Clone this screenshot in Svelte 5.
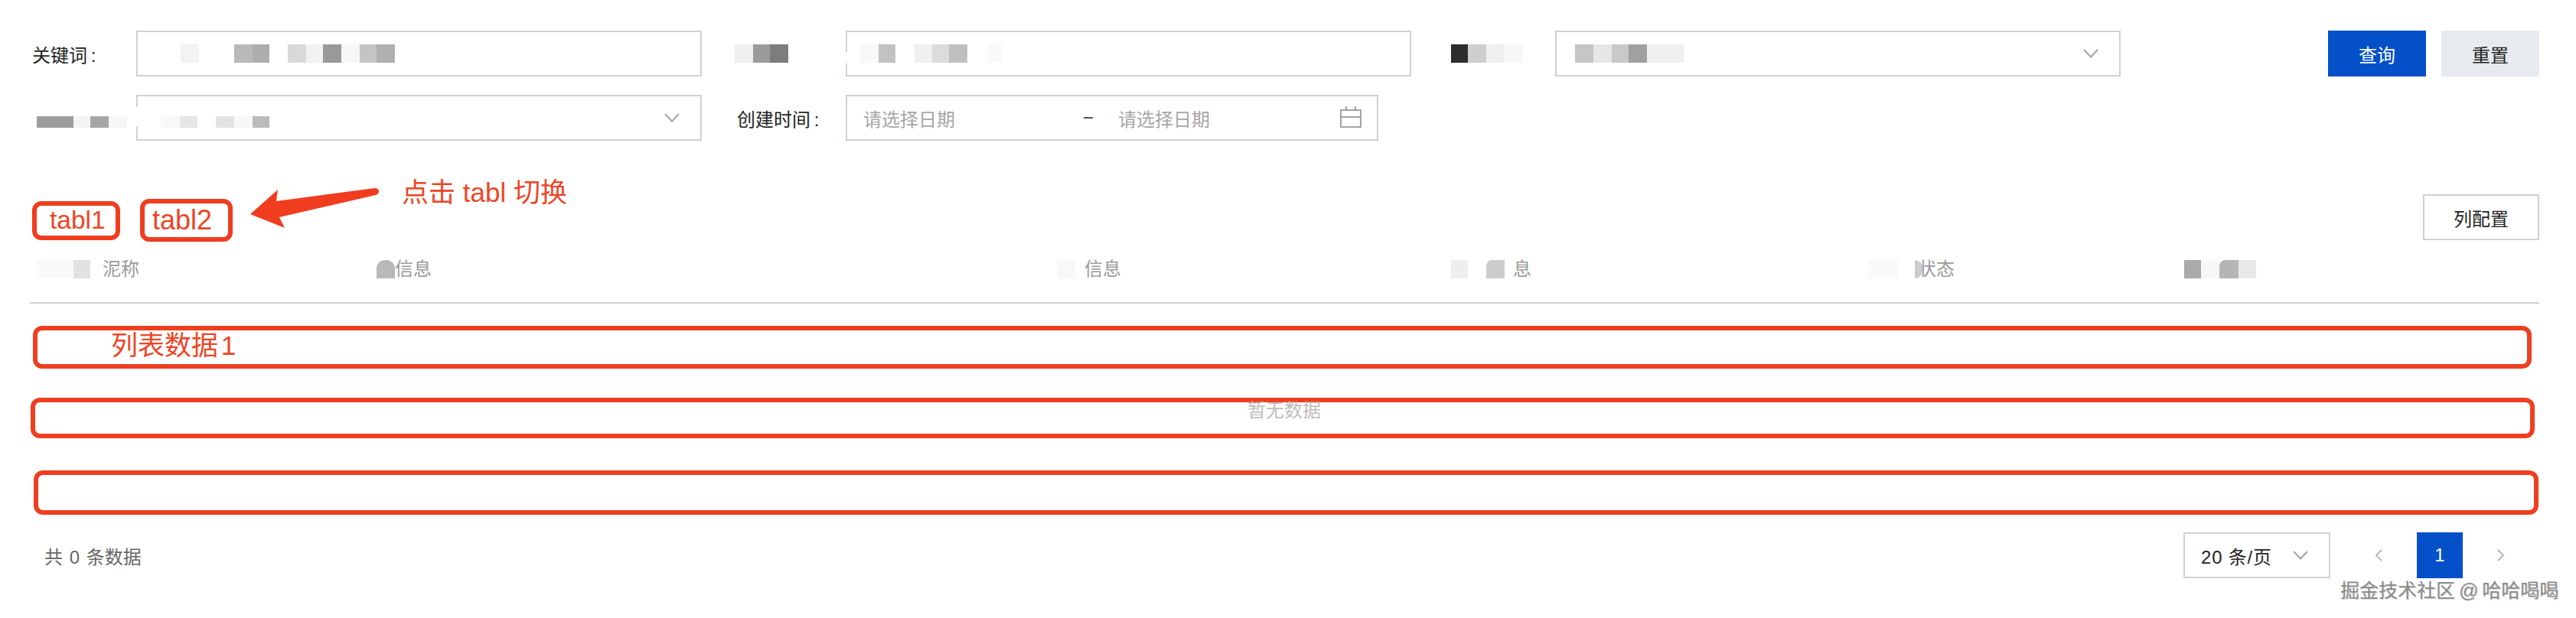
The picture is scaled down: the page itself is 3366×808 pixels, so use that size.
<script>
  // redacted text in the screenshot is mosaic: [width, colour, radius], no colour = gap
  const keywordCells = [[40], [24, '#f3f3f3'], [46], [24, '#b9b9b9'], [22, '#aeaeae'], [24], [24, '#d9d9d9'], [22, '#f2f2f2'], [24, '#999'], [24, '#f7f7f7'], [22, '#c4c4c4'], [24, '#b0b0b0']];
  const secondLabel = [[24, '#efefef'], [22, '#9b9b9b'], [24, '#7d7d7d']];
  const secondCells = [[25, '#f8f8f8'], [22, '#c2c2c2'], [25], [23, '#f0f0f0'], [22, '#dcdcdc'], [24, '#bfbfbf'], [26], [20, '#f9f9f9']];
  const thirdLabel = [[9], [22, '#2d2d2d'], [24, '#cfcfcf'], [23, '#efefef'], [25, '#f7f7f7']];
  const thirdCells = [[8], [24, '#c6c6c6'], [24, '#e6e6e6'], [22, '#c9c9c9'], [24, '#a0a0a0'], [48, '#efefef']];
  const fourthLabel = [[8], [48, '#9c9c9c'], [22, '#f4f4f4'], [24, '#a5a5a5'], [24, '#f6f6f6']];
  const fourthCells = [[14], [25, '#f8f8f8'], [23, '#e6e6e6'], [24], [24, '#e2e2e2'], [24, '#f7f7f7'], [22, '#bbb']];

  const columns = [
    { cells: [[48, '#f9f9f9'], [22, '#e2e2e2'], [16]], text: '泥称' },
    { cells: [[24, '#b9b9b9', '11px 11px 0 0']], text: '信息' },
    { cells: [[24, '#f8f8f8'], [12]], text: '信息' },
    { cells: [[22, '#eee'], [24], [24, '#ccc', '8px 0 0 0'], [11]], text: '息' },
    { cells: [[40, '#fafafa'], [22], [10, '#ccc', '0 10px 10px 0']], text: '状态', tuck: true },
    { cells: [[22, '#aaa'], [24, '#f7f7f7'], [25, '#b5b5b5', '8px 0 0 0'], [23, '#e8e8e8']], text: '' }
  ];
</script>

{#snippet mosaic(cells, low = false)}
  <span class="mosaic" class:low>
    {#each cells as [width, colour, radius]}
      <i style="width: {width}px; background: {colour ?? 'transparent'}; border-radius: {radius ?? 0};"></i>
    {/each}
  </span>
{/snippet}

{#snippet chevron()}
  <svg class="chevron" viewBox="0 0 20 12" aria-hidden="true">
    <path d="M1 1 L10 10.5 L19 1" />
  </svg>
{/snippet}

<div class="page">
  <section class="search">
    <div class="fields">
      <div class="field">
        <span class="label keyword">关键词 :</span>
        <div class="control">{@render mosaic(keywordCells)}</div>
      </div>
      <div class="field">
        <span class="label">{@render mosaic(secondLabel)}</span>
        <div class="control">
          <b class="erase upper"></b>
          {@render mosaic(secondCells)}
        </div>
      </div>
      <div class="field">
        <span class="label">{@render mosaic(thirdLabel)}</span>
        <div class="control select">
          {@render mosaic(thirdCells)}
          {@render chevron()}
        </div>
      </div>
      <div class="field">
        <span class="label">{@render mosaic(fourthLabel, true)}</span>
        <div class="control select">
          <b class="erase lower"></b>
          {@render mosaic(fourthCells, true)}
          {@render chevron()}
        </div>
      </div>
      <div class="field">
        <span class="label date-label">创建时间 :</span>
        <div class="control date">
          <span class="placeholder">请选择日期</span>
          <span class="dash"></span>
          <span class="placeholder">请选择日期</span>
          <svg class="calendar" viewBox="0 0 28 28" aria-hidden="true">
            <rect x="1" y="5" width="26" height="22" />
            <path d="M1 14 H27 M8 0 V5 M20 0 V5" />
          </svg>
        </div>
      </div>
    </div>
    <div class="actions">
      <button class="btn primary">查询</button>
      <button class="btn muted">重置</button>
    </div>
  </section>

  <section class="toolbar">
    <div class="tabs">
      <div class="tab first">tabl1</div>
      <div class="tab second">tabl2</div>
    </div>
    <button class="btn outline">列配置</button>
  </section>

  <div class="thead">
    {#each columns as col}
      <div class="th">
        {@render mosaic(col.cells)}
        {#if col.text}<span class:tuck={col.tuck}>{col.text}</span>{/if}
      </div>
    {/each}
  </div>

  <div class="rows">
    <div class="row one">列表数据 1</div>
    <div class="row two"><span>暂无数据</span></div>
    <div class="row three"></div>
  </div>

  <footer class="footer">
    <span class="total">共 0 条数据</span>
    <div class="pager">
      <div class="size">
        <span>20 条/页</span>
        {@render chevron()}
      </div>
      <div class="pages">
        <span class="nav">
          <svg viewBox="0 0 10 16" aria-hidden="true"><path d="M9 1 L2 8 L9 15" /></svg>
        </span>
        <span class="current">1</span>
        <span class="nav">
          <svg viewBox="0 0 10 16" aria-hidden="true"><path d="M1 1 L8 8 L1 15" /></svg>
        </span>
      </div>
    </div>
  </footer>

  <!-- hand-drawn annotation on top of the screenshot -->
  <svg class="arrow" viewBox="0 0 180 64" aria-hidden="true">
    <path d="M7 40 L43 8 L41 23 L169 6 Q175 6 175 10 Q175 14 171 15 L45 44 L52 58 Z" />
  </svg>
  <div class="note">点击 tabl 切换</div>
  <div class="watermark">掘金技术社区 @ 哈哈喝喝</div>
</div>

<style>
  :global(body) {
    margin: 0;
    background: #fff;
  }

  .page {
    position: relative;
    box-sizing: border-box;
    width: 3366px;
    height: 808px;
    padding: 40px 48px 0 40px;
    overflow: hidden;
    background: #fff;
    color: #222;
    font-family: "Liberation Sans", "Noto Sans CJK SC", sans-serif;
    font-size: 24px;
  }

  .search {
    display: flex;
    justify-content: space-between;
    align-items: flex-start;
  }

  .fields {
    display: grid;
    grid-template-columns: 877px 884px 884px;
    column-gap: 43px;
    row-gap: 24px;
  }

  .field {
    display: grid;
    grid-template-columns: 1fr 739px;
    align-items: center;
  }

  .label {
    word-spacing: -2px;
  }

  .keyword {
    padding-left: 2px;
  }

  .date-label {
    padding-left: 3px;
  }

  .control {
    position: relative;
    box-sizing: border-box;
    display: flex;
    align-items: center;
    height: 60px;
    padding: 0 27px 0 16px;
    border: 2px solid #ced1d4;
  }

  .select {
    justify-content: space-between;
  }

  /* mosaic smudge eats the left border in two places */
  .erase {
    position: absolute;
    left: -2px;
    width: 2px;
    background: #fff;
  }

  .erase.upper {
    top: 26px;
    height: 15px;
  }

  .erase.lower {
    top: 14px;
    height: 25px;
  }

  .date {
    width: 696px;
    padding-left: 21px;
    justify-self: start;
  }

  .placeholder {
    color: #a6a6a6;
  }

  .dash {
    width: 12px;
    height: 2px;
    margin: 0 33px 0 168px;
    background: #555;
  }

  .calendar {
    position: absolute;
    right: 20px;
    top: 13px;
    width: 28px;
    height: 28px;
    fill: none;
    stroke: #a3a3a3;
    stroke-width: 2;
  }

  .mosaic {
    position: relative;
    z-index: 1;
    display: flex;
    flex: none;
    height: 24px;
  }

  .mosaic.low {
    height: 15px;
    margin-top: 11px;
  }

  .mosaic i {
    display: block;
    flex: none;
  }

  .chevron {
    flex: none;
    width: 20px;
    height: 12px;
    fill: none;
    stroke: #a3a3a3;
    stroke-width: 2;
  }

  .actions {
    display: flex;
    gap: 20px;
  }

  .btn {
    box-sizing: border-box;
    width: 128px;
    height: 60px;
    padding: 0;
    border: 0;
    font: inherit;
    color: #222;
  }

  .primary {
    background: #0450c9;
    color: #fff;
  }

  .muted {
    background: #e7eaee;
  }

  .outline {
    width: 152px;
    border: 2px solid #ced1d4;
    background: #fff;
  }

  .toolbar {
    display: flex;
    justify-content: space-between;
    align-items: flex-start;
    margin-top: 70px;
  }

  .tabs {
    display: flex;
    align-items: center;
    gap: 26px;
    height: 56px;
    margin: 6px 0 0 2px;
  }

  .tab {
    box-sizing: border-box;
    display: flex;
    align-items: center;
    border: 6px solid #f03d1f;
    border-radius: 12px;
    color: #ee4526;
    line-height: 1;
  }

  .first {
    width: 115px;
    height: 51px;
    padding-left: 17px;
    font-size: 33.5px;
  }

  .second {
    width: 121px;
    height: 56px;
    padding-left: 10px;
    font-size: 36px;
  }

  .thead {
    display: grid;
    grid-template-columns: 444px 889px 515px 544px 414px 1fr;
    margin: 24px 0 0 -2px;
    padding: 0 0 31px 10px;
    border-bottom: 2px solid #d0d3d3;
    color: #9a9a9a;
    line-height: 24px;
  }

  .th {
    display: flex;
  }

  .tuck {
    margin-left: -6px;
  }

  .rows {
    display: flex;
    flex-direction: column;
    margin-top: 29px;
  }

  .row {
    box-sizing: border-box;
    border: 6px solid #ee3f20;
    border-radius: 12px;
  }

  .one {
    height: 56px;
    margin: 0 10px 0 3px;
    padding-left: 96px;
    color: #ee4526;
    font-size: 35px;
    line-height: 40px;
    word-spacing: -6px;
  }

  .two {
    display: flex;
    justify-content: center;
    height: 53px;
    margin: 38px 6px 0 0;
    padding-left: 4px;
    color: #bdbdbd;
    line-height: 22px;
  }

  .three {
    height: 58px;
    margin: 42px 1px 0 4px;
  }

  .footer {
    display: flex;
    justify-content: space-between;
    align-items: center;
    margin-top: 23px;
  }

  .total {
    padding-left: 18px;
    color: #666;
    word-spacing: 2px;
  }

  .pager {
    display: flex;
    gap: 33px;
    padding-right: 20px;
  }

  .size {
    box-sizing: border-box;
    display: flex;
    justify-content: space-between;
    align-items: center;
    width: 192px;
    height: 60px;
    padding: 0 27px 0 21px;
    border: 2px solid #ced1d4;
    letter-spacing: 0.8px;
  }

  .pages {
    display: flex;
    gap: 20px;
  }

  .pages span {
    display: flex;
    justify-content: center;
    align-items: center;
    width: 60px;
    height: 60px;
  }

  .nav svg {
    width: 10px;
    height: 16px;
    fill: none;
    stroke: #b8b8b8;
    stroke-width: 2;
  }

  .current {
    background: #0450c9;
    color: #fff;
  }

  .arrow {
    position: absolute;
    left: 320px;
    top: 240px;
    width: 180px;
    height: 64px;
    fill: #f03d1f;
  }

  .note {
    position: absolute;
    left: 525px;
    top: 232px;
    color: #ee4526;
    font-size: 35px;
    line-height: 40px;
  }

  .watermark {
    position: absolute;
    left: 3058px;
    top: 756px;
    color: #8a8a8a;
    font-size: 25px;
    line-height: 32px;
    white-space: nowrap;
    word-spacing: -2px;
    text-shadow: 1px 1px 0 #d5d5d5;
  }
</style>
